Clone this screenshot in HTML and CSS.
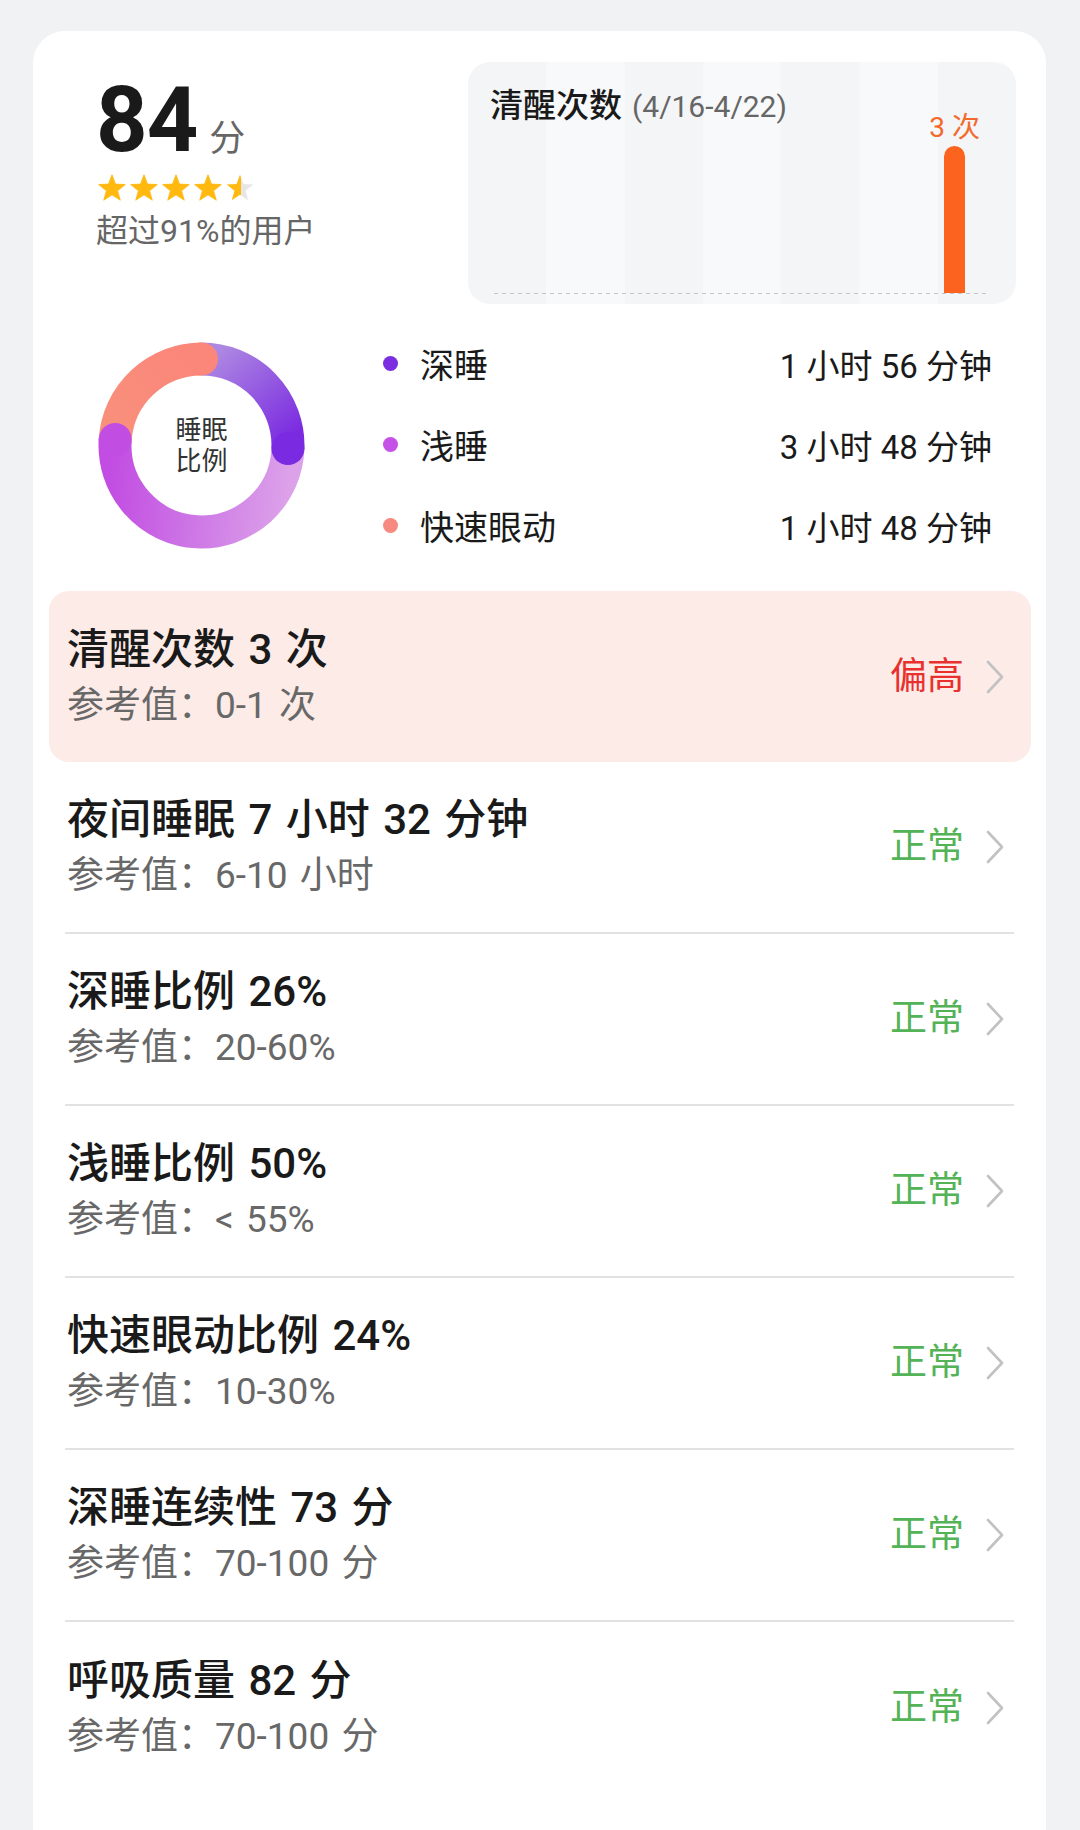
FILE: index.html
```html
<!DOCTYPE html>
<html lang="zh-CN">
<head>
<meta charset="utf-8">
<title>睡眠报告</title>
<link rel="stylesheet" href="styles.css">
</head>
<body>
<div class="card">
  <section class="top">
    <div class="score">
      <div class="score-line"><span class="score-num">84</span><span class="score-unit">分</span></div>
      <div class="stars">
        <svg class="star" viewBox="0 0 26 26"><path d="M13 0.8 L16.21 9.38 L25.36 9.78 L18.19 15.49 L20.64 24.32 L13 19.26 L5.36 24.32 L7.81 15.49 L0.64 9.78 L9.79 9.38 Z"/></svg>
        <svg class="star" viewBox="0 0 26 26"><path d="M13 0.8 L16.21 9.38 L25.36 9.78 L18.19 15.49 L20.64 24.32 L13 19.26 L5.36 24.32 L7.81 15.49 L0.64 9.78 L9.79 9.38 Z"/></svg>
        <svg class="star" viewBox="0 0 26 26"><path d="M13 0.8 L16.21 9.38 L25.36 9.78 L18.19 15.49 L20.64 24.32 L13 19.26 L5.36 24.32 L7.81 15.49 L0.64 9.78 L9.79 9.38 Z"/></svg>
        <svg class="star" viewBox="0 0 26 26"><path d="M13 0.8 L16.21 9.38 L25.36 9.78 L18.19 15.49 L20.64 24.32 L13 19.26 L5.36 24.32 L7.81 15.49 L0.64 9.78 L9.79 9.38 Z"/></svg>
        <svg class="star star-half" viewBox="0 0 26 26">
          <defs><linearGradient id="half" x1="0" y1="0" x2="1" y2="0"><stop offset="0.55" stop-color="#ffb90f"/><stop offset="0.55" stop-color="#e6e6e6"/></linearGradient></defs>
          <path d="M13 0.8 L16.21 9.38 L25.36 9.78 L18.19 15.49 L20.64 24.32 L13 19.26 L5.36 24.32 L7.81 15.49 L0.64 9.78 L9.79 9.38 Z"/>
        </svg>
      </div>
      <div class="score-rank">超过91%的用户</div>
    </div>
    <div class="chart">
      <div class="chart-title"><span class="ct-main">清醒次数</span><span class="ct-range">(4/16-4/22)</span></div>
      <div class="plot">
        <div class="col"></div>
        <div class="col"></div>
        <div class="col"></div>
        <div class="col"></div>
        <div class="col"></div>
        <div class="col"></div>
        <div class="col"><span class="bar"><span class="bar-label">3 次</span></span></div>
      </div>
      <div class="baseline"></div>
    </div>
  </section>

  <section class="ratio">
    <div class="donut">
      <svg viewBox="0 0 207 207" width="207" height="207">
        <defs>
          <linearGradient id="gDeep" gradientUnits="userSpaceOnUse" x1="110" y1="17" x2="185" y2="105">
            <stop offset="0" stop-color="#ad88e2"/>
            <stop offset="1" stop-color="#7a2ae0"/>
          </linearGradient>
          <linearGradient id="gLight" gradientUnits="userSpaceOnUse" x1="195" y1="120" x2="17" y2="100">
            <stop offset="0" stop-color="#dca2e9"/>
            <stop offset="0.5" stop-color="#ce78e6"/>
            <stop offset="1" stop-color="#c24de2"/>
          </linearGradient>
          <linearGradient id="gRem" gradientUnits="userSpaceOnUse" x1="100" y1="17" x2="17" y2="97">
            <stop offset="0" stop-color="#fb867a"/>
            <stop offset="1" stop-color="#f8907c"/>
          </linearGradient>
        </defs>
        <g fill="none" stroke-width="33">
          <path d="M103.5 17 A86.5 86.5 0 0 1 189.95 106.52" stroke="url(#gDeep)"/>
          <path d="M189.95 106.52 A86.5 86.5 0 1 1 17.21 97.47" stroke="url(#gLight)"/>
          <path d="M17.21 97.47 A86.5 86.5 0 0 1 103.5 17" stroke="url(#gRem)"/>
        </g>
        <circle cx="189.95" cy="106.52" r="16.5" fill="#7a2ae0"/>
        <circle cx="17.21" cy="97.47" r="16.5" fill="#c24de2"/>
        <circle cx="103.5" cy="17" r="16.5" fill="#fb867a"/>
      </svg>
      <div class="donut-label">睡眠<br>比例</div>
    </div>
    <div class="legend">
      <div class="lg-row"><span class="dot dot-deep"></span><span class="lg-name">深睡</span><span class="lg-val">1 小时 56 分钟</span></div>
      <div class="lg-row"><span class="dot dot-light"></span><span class="lg-name">浅睡</span><span class="lg-val">3 小时 48 分钟</span></div>
      <div class="lg-row"><span class="dot dot-rem"></span><span class="lg-name">快速眼动</span><span class="lg-val">1 小时 48 分钟</span></div>
    </div>
  </section>

  <section class="list">
    <div class="item alert">
      <div class="item-text"><div class="item-title">清醒次数 3 次</div><div class="item-ref">参考值：0-1 次</div></div>
      <span class="status high">偏高</span>
      <svg class="chev" viewBox="0 0 20 36"><polyline points="3,3 17,18 3,33"/></svg>
    </div>
    <div class="item">
      <div class="item-text"><div class="item-title">夜间睡眠 7 小时 32 分钟</div><div class="item-ref">参考值：6-10 小时</div></div>
      <span class="status ok">正常</span>
      <svg class="chev" viewBox="0 0 20 36"><polyline points="3,3 17,18 3,33"/></svg>
    </div>
    <div class="item">
      <div class="item-text"><div class="item-title">深睡比例 26%</div><div class="item-ref">参考值：20-60%</div></div>
      <span class="status ok">正常</span>
      <svg class="chev" viewBox="0 0 20 36"><polyline points="3,3 17,18 3,33"/></svg>
    </div>
    <div class="item">
      <div class="item-text"><div class="item-title">浅睡比例 50%</div><div class="item-ref">参考值：&lt; 55%</div></div>
      <span class="status ok">正常</span>
      <svg class="chev" viewBox="0 0 20 36"><polyline points="3,3 17,18 3,33"/></svg>
    </div>
    <div class="item">
      <div class="item-text"><div class="item-title">快速眼动比例 24%</div><div class="item-ref">参考值：10-30%</div></div>
      <span class="status ok">正常</span>
      <svg class="chev" viewBox="0 0 20 36"><polyline points="3,3 17,18 3,33"/></svg>
    </div>
    <div class="item">
      <div class="item-text"><div class="item-title">深睡连续性 73 分</div><div class="item-ref">参考值：70-100 分</div></div>
      <span class="status ok">正常</span>
      <svg class="chev" viewBox="0 0 20 36"><polyline points="3,3 17,18 3,33"/></svg>
    </div>
    <div class="item last">
      <div class="item-text"><div class="item-title">呼吸质量 82 分</div><div class="item-ref">参考值：70-100 分</div></div>
      <span class="status ok">正常</span>
      <svg class="chev" viewBox="0 0 20 36"><polyline points="3,3 17,18 3,33"/></svg>
    </div>
  </section>
</div>
</body>
</html>
```

FILE: styles.css
```css
* { box-sizing: border-box; }

html, body {
  margin: 0;
  padding: 0;
}

body {
  background: #f1f2f4;
  font-family: Roboto, "Noto Sans CJK SC", "Noto Sans", sans-serif;
  color: #1a1a1a;
  width: 1080px;
  height: 1830px;
  overflow: hidden;
}

.card {
  margin: 31px 34px 0 33px;
  min-height: 1799px;
  background: #ffffff;
  border-radius: 32px 32px 0 0;
  padding: 31px 15px 0 16px;
}

/* ---------- top ---------- */
.top {
  display: flex;
  justify-content: space-between;
  height: 242px;
}

.score {
  padding: 14px 0 0 47px;
}

.score-line {
  display: flex;
  align-items: baseline;
  line-height: 90px;
  height: 90px;
}

.score-num {
  font-family: Roboto, sans-serif;
  font-weight: 700;
  font-size: 90px;
  letter-spacing: -1px;
  color: #1a1a1a;
}

.score-unit {
  font-size: 36px;
  color: #666666;
  margin-left: 12px;
}

.stars {
  display: flex;
  gap: 4px;
  margin-top: 8px;
  margin-left: 2px;
}

.star {
  width: 28px;
  height: 28px;
  fill: #ffb90f;
  stroke: #ffb90f;
  stroke-width: 0.8;
  stroke-linejoin: round;
}

.star-half {
  fill: url(#half);
  stroke: none;
}

.score-rank {
  margin-top: 8px;
  font-size: 32px;
  line-height: 42px;
  color: #666666;
}

.chart {
  width: 548px;
  height: 242px;
  margin-right: 15px;
  border-radius: 22px;
  background: repeating-linear-gradient(90deg, #f4f5f7 0 78.3px, #f8f9fa 78.3px 156.6px);
  display: flex;
  flex-direction: column;
  padding: 24px 26px 10px 26px;
}

.chart-title {
  display: flex;
  align-items: baseline;
  line-height: 40px;
  margin-left: -4px;
}

.ct-main {
  font-size: 33px;
  font-weight: 500;
  color: #1a1a1a;
}

.ct-range {
  font-size: 30px;
  color: #666666;
  margin-left: 10px;
}

.plot {
  flex: 1;
  display: flex;
  align-items: flex-end;
}

.col {
  flex: 1;
  display: flex;
  justify-content: center;
  align-items: flex-end;
}

.bar {
  position: relative;
  display: block;
  width: 21px;
  height: 147px;
  border-radius: 10.5px 10.5px 0 0;
  background: #fb631f;
}

.bar-label {
  position: absolute;
  left: 50%;
  bottom: 100%;
  transform: translateX(-50%);
  font-size: 28px;
  line-height: 36px;
  color: #f26a2c;
  white-space: nowrap;
}

.baseline {
  height: 1px;
  background: repeating-linear-gradient(90deg, #c4c6c9 0 4px, transparent 4px 8px);
}

/* ---------- ratio ---------- */
.ratio {
  display: flex;
  align-items: center;
  margin-top: 19px;
  padding-left: 49px;
}

.donut {
  position: relative;
  width: 207px;
  height: 207px;
  flex: none;
  margin-top: 2px;
}

.donut svg {
  display: block;
}

.donut-label {
  position: absolute;
  left: 0;
  top: 0;
  width: 207px;
  height: 207px;
  display: flex;
  align-items: center;
  justify-content: center;
  text-align: center;
  font-size: 26px;
  line-height: 31px;
  color: #333333;
}

.legend {
  flex: 1;
  margin-left: 78px;
  margin-right: 39px;
}

.lg-row {
  display: flex;
  align-items: center;
  height: 81px;
}

.dot {
  width: 15px;
  height: 15px;
  border-radius: 50%;
  margin-right: 22px;
  flex: none;
}

.dot-deep { background: #7b2ee0; }
.dot-light { background: #c452e6; }
.dot-rem { background: #f68a80; }

.lg-name {
  font-size: 34px;
  color: #1a1a1a;
}

.lg-val {
  margin-left: auto;
  font-size: 33px;
  color: #1a1a1a;
}

/* ---------- list ---------- */
.list {
  margin-top: 25px;
}

.item {
  display: flex;
  align-items: center;
  height: 172px;
  margin: 0 17px 0 16px;
  padding: 0 9px 0 2px;
  border-bottom: 2px solid #e2e2e2;
}

.item.alert {
  height: 171px;
  margin: 0;
  padding: 0 26px 0 18px;
  border: none;
  border-radius: 20px;
  background: #fcebe7;
}

.item.last {
  border-bottom: none;
}

.item-text {
  flex: 1;
}

.item-title {
  font-size: 42px;
  line-height: 50px;
  font-weight: 500;
  word-spacing: 3px;
  color: #1a1a1a;
}

.item-ref {
  margin-top: 8px;
  font-size: 37px;
  line-height: 46px;
  word-spacing: 3px;
  color: #686868;
}

.status {
  font-size: 37px;
  line-height: 44px;
  margin-right: 21px;
}

.status.ok { color: #53b356; }
.status.high { color: #e8312f; }

.chev {
  width: 20px;
  height: 36px;
  fill: none;
  stroke: #c2c2c2;
  stroke-width: 2.6;
  stroke-linecap: round;
  stroke-linejoin: round;
}
```
